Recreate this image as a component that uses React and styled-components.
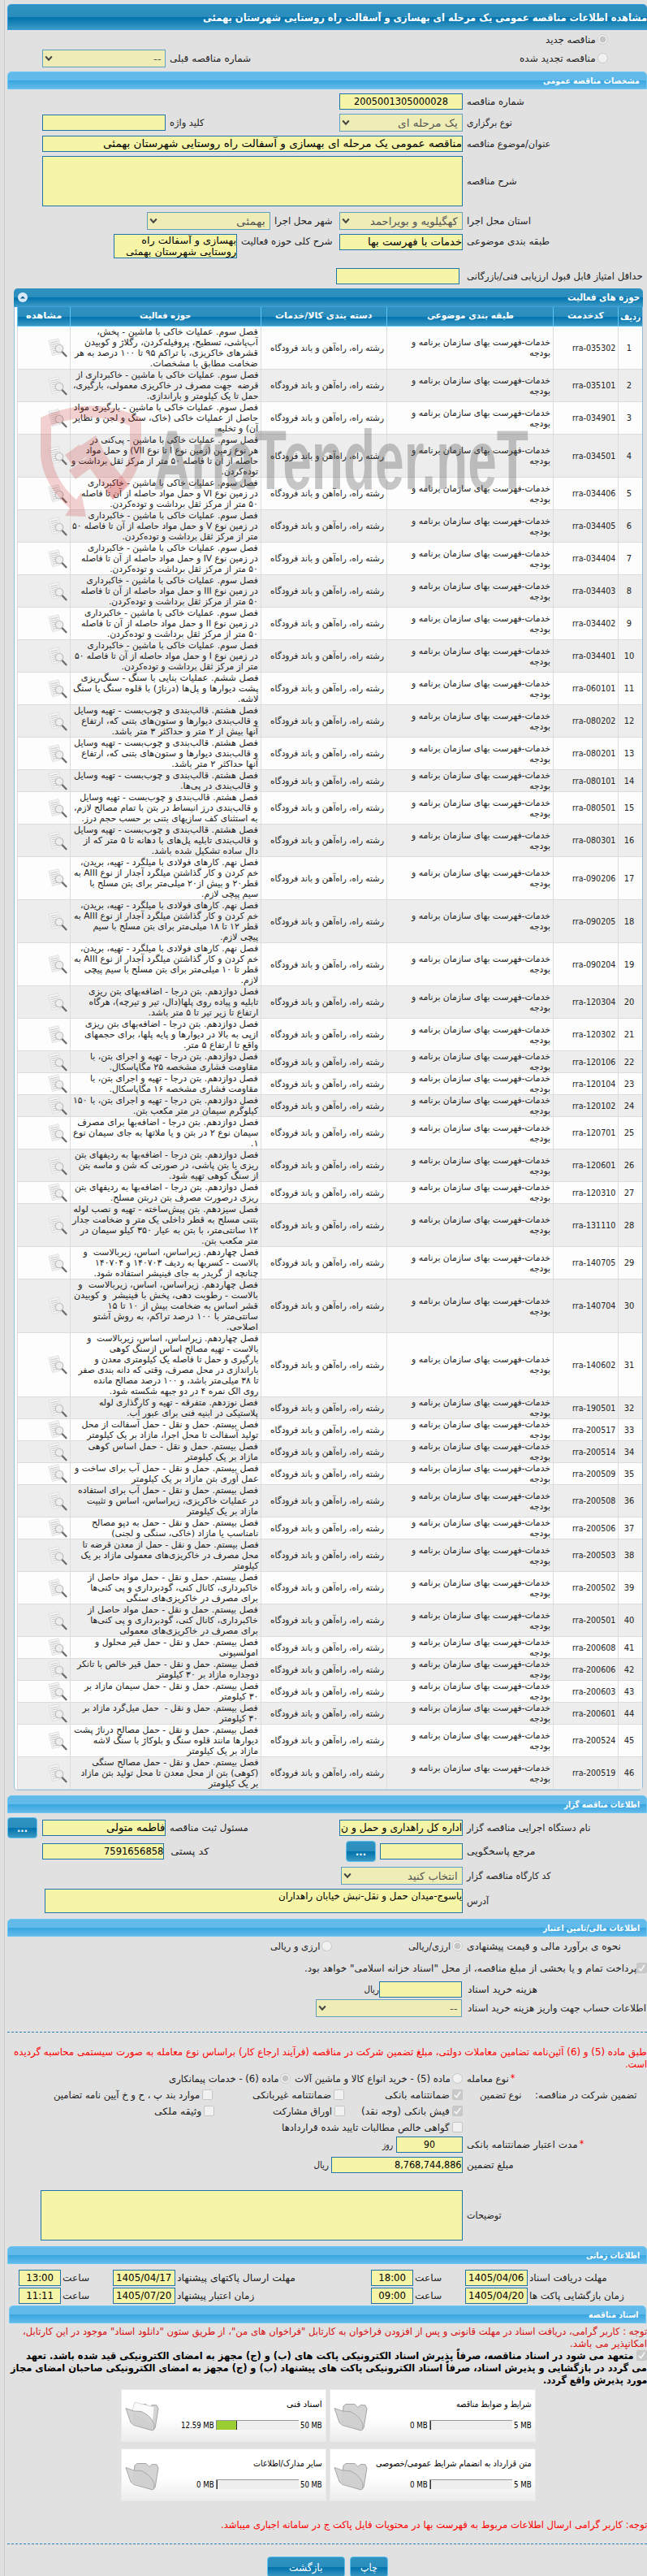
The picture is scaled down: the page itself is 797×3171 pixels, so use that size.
import React, { useLayoutEffect, useRef, useState } from "react"
import styled, { createGlobalStyle, css } from "styled-components"

const GROUP = "رشته راه، راه‌آهن و باند فرودگاه"

// code, width of the text block, lines
const activities = [
  ["rra-035302", 226, "فصل سوم. عملیات خاکی با ماشین - پخش،|آب‌پاشی، تسطیح، پروفیله‌کردن، رگلاژ و کوبیدن|قشرهای خاکریزی، با تراکم ۹۵ تا ۱۰۰ درصد به هر|ضخامت مطابق با مشخصات."],
  ["rra-035101", 228, "فصل سوم. عملیات خاکی با ماشین - خاکبرداری از|قرضه  جهت مصرف در خاکریزی معمولی، بارگیری،|حمل تا یک کیلومتر و باراندازی."],
  ["rra-034901", 228, "فصل سوم. عملیات خاکی با ماشین - بارگیری مواد|حاصل از عملیات خاکی (خاک، سنگ و لجن و نظایر|آن) و تخلیه"],
  ["rra-034501", 230, "فصل سوم. عملیات خاکی با ماشین - پی‌کنی در|هر نوع زمین (زمین نوع I تا نوع VII) و حمل مواد|حاصله از آن تا فاصله ۵۰ متر از مرکز ثقل برداشت و|توده‌کردن."],
  ["rra-034406", 218, "فصل سوم. عملیات خاکی با ماشین - خاکبرداری|در زمین نوع VI و حمل مواد حاصله از آن تا فاصله|۵۰ متر از مرکز ثقل برداشت و توده‌کردن."],
  ["rra-034405", 229, "فصل سوم. عملیات خاکی با ماشین - خاکبرداری|در زمین نوع V و حمل مواد حاصله از آن تا فاصله ۵۰|متر از مرکز ثقل برداشت و توده‌کردن."],
  ["rra-034404", 218, "فصل سوم. عملیات خاکی با ماشین - خاکبرداری|در زمین نوع IV و حمل مواد حاصله از آن تا فاصله|۵۰ متر از مرکز ثقل برداشت و توده‌کردن."],
  ["rra-034403", 218.5, "فصل سوم. عملیات خاکی با ماشین - خاکبرداری|در زمین نوع III و حمل مواد حاصله از آن تا فاصله|۵۰ متر از مرکز ثقل برداشت و توده‌کردن."],
  ["rra-034402", 218, "فصل سوم. عملیات خاکی با ماشین - خاکبرداری|در زمین نوع II و حمل مواد حاصله از آن تا فاصله|۵۰ متر از مرکز ثقل برداشت و توده‌کردن."],
  ["rra-034401", 226, "فصل سوم. عملیات خاکی با ماشین - خاکبرداری|در زمین نوع I و حمل مواد حاصله از آن تا فاصله ۵۰|متر از مرکز ثقل برداشت و توده‌کردن."],
  ["rra-060101", 228, "فصل ششم. عملیات بنایی با سنگ - سنگ‌ریزی|پشت دیوارها و پل‌ها (درناژ) با قلوه سنگ یا سنگ|لاشه."],
  ["rra-080202", 227, "فصل هشتم. قالب‌بندی و چوب‌بست - تهیه وسایل|و قالب‌بندی دیوارها و ستون‌های بتنی که، ارتفاع|آنها بیش از ۲ متر و حداکثر ۳ متر باشد."],
  ["rra-080201", 227, "فصل هشتم. قالب‌بندی و چوب‌بست - تهیه وسایل|و قالب‌بندی دیوارها و ستون‌های بتنی که، ارتفاع|آنها حداکثر ۲ متر باشد."],
  ["rra-080101", 227, "فصل هشتم. قالب‌بندی و چوب‌بست - تهیه وسایل|و قالب‌بندی در پی‌ها."],
  ["rra-080501", 227, "فصل هشتم. قالب‌بندی و چوب‌بست - تهیه وسایل|و قالب‌بندی درز انبساط در بتن با تمام مصالح لازم،|به استثنای کف سازیهای بتنی بر حسب حجم درز."],
  ["rra-080301", 227, "فصل هشتم. قالب‌بندی و چوب‌بست - تهیه وسایل|و قالب‌بندی تابلیه پل‌های با دهانه تا ۵ متر که از|دال ساده تشکیل شده باشد."],
  ["rra-090206", 227, "فصل نهم. کارهای فولادی با میلگرد - تهیه، بریدن،|خم کردن و کار گذاشتن میلگرد آجدار از نوع AIII به|قطر۲۰ و بیش از۲۰ میلی‌متر برای بتن مسلح با|سیم پیچی لازم."],
  ["rra-090205", 227, "فصل نهم. کارهای فولادی با میلگرد - تهیه، بریدن،|خم کردن و کار گذاشتن میلگرد آجدار از نوع AIII به|قطر ۱۲ تا ۱۸ میلی‌متر برای بتن مسلح با سیم|پیچی لازم."],
  ["rra-090204", 227, "فصل نهم. کارهای فولادی با میلگرد - تهیه، بریدن،|خم کردن و کار گذاشتن میلگرد آجدار از نوع AIII به|قطر تا ۱۰ میلی‌متر برای بتن مسلح با سیم پیچی|لازم."],
  ["rra-120304", 209, "فصل دوازدهم. بتن درجا - اضافه‌بهای بتن ریزی|تابلیه و پیاده روی پلها(دال، تیر و تیرچه)، هرگاه|ارتفاع تا زیر تیر تا ۵ متر باشد."],
  ["rra-120302", 214, "فصل دوازدهم. بتن درجا - اضافه‌بهای بتن ریزی|ازپی به بالا در دیوارها و پایه پلها، برای حجمهای|واقع تا ارتفاع ۵ متر."],
  ["rra-120106", 207, "فصل دوازدهم. بتن درجا - تهیه و اجرای بتن، با|مقاومت فشاری مشخصه ۲۵ مگاپاسکال."],
  ["rra-120104", 207, "فصل دوازدهم. بتن درجا - تهیه و اجرای بتن، با|مقاومت فشاری مشخصه ۱۶ مگاپاسکال."],
  ["rra-120102", 228, "فصل دوازدهم. بتن درجا - تهیه و اجرای بتن، با ۱۵۰|کیلوگرم سیمان در متر مکعب بتن."],
  ["rra-120701", 228, "فصل دوازدهم. بتن درجا - اضافه‌بها برای مصرف|سیمان نوع ۲ در بتن و یا ملاتها به جای سیمان نوع|۱."],
  ["rra-120601", 226, "فصل دوازدهم. بتن درجا - اضافه‌بها به ردیفهای بتن|ریزی یا بتن پاشی، در صورتی که شن و ماسه بتن|از سنگ کوهی تهیه شود."],
  ["rra-120310", 226, "فصل دوازدهم. بتن درجا - اضافه‌بها به ردیفهای بتن|ریزی درصورت مصرف بتن دربتن مسلح."],
  ["rra-131110", 229, "فصل سیزدهم. بتن پیش‌ساخته - تهیه و نصب لوله|بتنی مسلح به قطر داخلی یک متر و ضخامت جدار|۱۲ سانتی‌متر، با بتن به عیار ۳۵۰ کیلو سیمان در|متر مکعب بتن."],
  ["rra-140705", 215.5, "فصل چهاردهم. زیراساس، اساس، زیربالاست  و|بالاست - کسربها به ردیف ۱۴۰۷۰۳ و ۱۴۰۷۰۴|چنانچه از گریدر به جای فینیشر استفاده شود."],
  ["rra-140704", 227, "فصل چهاردهم. زیراساس، اساس، زیربالاست  و|بالاست - رطوبت دهی، پخش با فینیشر  و کوبیدن|قشر اساس به ضخامت بیش از ۱۰ تا ۱۵|سانتی‌متر با ۱۰۰ درصد تراکم، به روش آشتو|اصلاحی."],
  ["rra-140602", 221.5, "فصل چهاردهم. زیراساس، اساس، زیربالاست  و|بالاست - تهیه مصالح اساس ازسنگ کوهی|بارگیری و حمل تا فاصله یک کیلومتری معدن و|باراندازی در محل مصرف، وقتی که دانه بندی صفر|تا ۳۸ میلی‌متر باشد، و ۱۰۰ درصد مصالح مانده|روی الک نمره ۴ در دو جبهه شکسته شود."],
  ["rra-190501", 196, "فصل نوزدهم. متفرقه - تهیه و کارگذاری لوله|پلاستیکی در ابنیه فنی برای عبور آب."],
  ["rra-200517", 217.5, "فصل بیستم. حمل و نقل - حمل آسفالت از محل|تولید آسفالت تا محل اجرا، مازاد بر یک کیلومتر"],
  ["rra-200514", 209.5, "فصل بیستم. حمل و نقل - حمل اساس کوهی|مازاد بر یک کیلومتر"],
  ["rra-200509", 226, "فصل بیستم. حمل و نقل - حمل آب برای ساخت و|عمل آوری بتن مازاد بر یک کیلومتر"],
  ["rra-200508", 222, "فصل بیستم. حمل و نقل - حمل آب برای استفاده|در عملیات خاکریزی، زیراساس، اساس و تثبیت|مازاد بر یک کیلومتر"],
  ["rra-200506", 205, "فصل بیستم. حمل و نقل - حمل به دپو مصالح|نامناسب یا مازاد (خاکی، سنگی و لجنی)"],
  ["rra-200503", 218.5, "فصل بیستم. حمل و نقل - حمل از معدن قرضه تا|محل مصرف در خاکریزی‌های معمولی مازاد بر یک|کیلومتر"],
  ["rra-200502", 210, "فصل بیستم. حمل و نقل - حمل مواد حاصل از|خاکبرداری، کانال کنی، گودبرداری و پی کنی‌ها|برای مصرف در خاکریزی‌های سنگی"],
  ["rra-200501", 210, "فصل بیستم. حمل و نقل - حمل مواد حاصل از|خاکبرداری، کانال کنی، گودبرداری و پی کنی‌ها|برای مصرف در خاکریزی‌های معمولی"],
  ["rra-200608", 201, "فصل بیستم. حمل و نقل - حمل قیر محلول و|امولسیونی"],
  ["rra-200606", 223, "فصل بیستم. حمل و نقل - حمل قیر خالص با تانکر|دوجداره مازاد بر ۳۰ کیلومتر"],
  ["rra-200603", 214, "فصل بیستم. حمل و نقل - حمل سیمان مازاد بر|۳۰ کیلومتر"],
  ["rra-200601", 216.5, "فصل بیستم. حمل و نقل -  حمل میل‌گرد مازاد بر|۳۰ کیلومتر"],
  ["rra-200524", 227, "فصل بیستم. حمل و نقل - حمل مصالح درناژ پشت|دیوارها مانند قلوه سنگ و بلوکاژ با سنگ لاشه|مازاد بر یک کیلومتر"],
  ["rra-200519", 218.5, "فصل بیستم. حمل و نقل - حمل مصالح سنگی|(کوهی) بتن از محل معدن تا محل تولید بتن مازاد|بر یک کیلومتر"],
]

const columns = [
  ["ردیف", 25],
  ["کدخدمت", 45],
  ["طبقه بندی موضوعی", 107],
  ["دسته بندی کالا/خدمات", 119],
  ["حوزه فعالیت", 63],
  ["مشاهده", 44],
]

const folders = [
  { title: "شرایط و ضوابط مناقصه", w: 93, max: 5, maxW: 22, used: 0, usedW: 22 },
  { title: "اسناد فنی", w: 44, max: 50, maxW: 27, used: 12.59, usedW: 41 },
  { title: "متن قرارداد به انضمام شرایط عمومی/خصوصی", w: 192, max: 5, maxW: 22, used: 0, usedW: 22 },
  { title: "سایر مدارک/اطلاعات", w: 85, max: 50, maxW: 27, used: 0, usedW: 22 },
]

const dates = [
  [
    ["مهلت دریافت اسناد", 96, "1405/04/06", "18:00"],
    ["مهلت ارسال پاکتهای پیشنهاد", 146, "1405/04/17", "13:00"],
  ],
  [
    ["زمان بازگشایی پاکت ها", 117, "1405/04/20", "09:00"],
    ["زمان اعتبار پیشنهاد", 95, "1405/07/20", "11:11"],
  ],
]

// keeps a text at its set width whatever font is installed
const Fit = ({ w, children }) => {
  const inner = useRef(null)
  const [scale, setScale] = useState(1)
  useLayoutEffect(() => {
    setScale(w / inner.current.offsetWidth)
  }, [w])
  return (
    <FitBox $w={w}>
      <FitText ref={inner} style={{ transform: `scaleX(${scale})` }}>{children}</FitText>
    </FitBox>
  )
}

const Magnifier = () => (
  <MagnifierIcon viewBox="0 0 24 24">
    <path d="M1 3.500L13 .8l4.500 17.700L5.500 21.500Z" fill="#f6f6f6" stroke="#d6d6d6" strokeWidth=".7" />
    <path d="M3 6l9.500-2M3.600 8.500l9.500-2M4.200 11l6-1.300M4.800 13.500l5-1.100M5.500 16l5-1M6 18.500l7-1.500" stroke="#c2c2c2" strokeWidth=".9" />
    <circle cx="14" cy="13" r="4.800" fill="#ececec" fillOpacity=".85" stroke="#bcbcbc" strokeWidth="1.100" />
    <path d="M18 17.500l4.500 4.700" stroke="#6c6c6c" strokeWidth="2.300" strokeLinecap="round" />
  </MagnifierIcon>
)

const Folder = ({ full }) => (
  <FolderIcon viewBox="0 0 44 40">
    <path d="M12 8l3-2.500h11l4 4 3-3 6 .3 2 4.200-4 24-4 2.500L10 28Z" fill="#d4d4d4" stroke="#a5a5a5" strokeLinejoin="round" />
    {full && <path d="M8.500 15l3.500-12 24 6-2 22Z" fill="#fbfbfb" stroke="#d2d2d2" strokeWidth=".8" />}
    <path d="M1 10.500l10 3.500 9 .5c7 3 13 8 16 16l-.5 6.500-2 .8L11 31.500 7 28Z" fill="#cfcfcf" fillOpacity=".9" stroke="#a8a8a8" strokeLinejoin="round" />
  </FolderIcon>
)

const Watermark = () => (
  <WatermarkArt viewBox="0 0 620 150">
    <g fill="#c81e1e" fillOpacity=".2">
      <path fillRule="evenodd" d="M0 15Q62-14 124 15V58Q120 92 89 116L80 105 97 89Q110 75 110 50V25Q62 5 13 25V61Q18 94 44 116L50 107 56 137 30 136 36 127Q2 96 0 61Z" />
      <path d="M30 61L48 48 58 62 40 75ZM49 50L68 37 80 61 109 99 89 116 61 78 43 91 35 80 57 64Z" />
    </g>
    <text x="139" y="103" textLength="462" lengthAdjust="spacingAndGlyphs">AriaTender.neT</text>
  </WatermarkArt>
)

const Section = ({ children, w, top, inset }) => (
  <SectionBar $top={top} $inset={inset}><Fit w={w}>{children}</Fit></SectionBar>
)

const Label = ({ children, w, col, near, star }) => (
  <LabelBox $col={col} $near={near}>
    {star && <Star>*</Star>}
    <Fit w={w}>{children}</Fit>
  </LabelBox>
)

const Input = ({ children, w, text, gap, center }) => (
  <Field $w={w} $gap={gap} $center={center}>{children && <Fit w={text}>{children}</Fit>}</Field>
)

const Select = ({ children, w, text }) => (
  <SelectBox $w={w}>
    <Fit w={text}>{children}</Fit>
    <svg viewBox="0 0 10 8" width="10" height="8"><path d="M1.200 1.500L5 5.700 8.800 1.500" fill="none" stroke="#444" strokeWidth="2" /></svg>
  </SelectBox>
)

const Check = ({ checked }) => (
  <CheckBox $checked={checked}>
    {checked && <svg viewBox="0 0 12 12"><path d="M2 6.500l2.800 3L10 2" fill="none" stroke="#f6f6f6" strokeWidth="1.800" /></svg>}
  </CheckBox>
)

const RadioOption = ({ children, checked, w, col, gap }) => (
  <Option $col={col} $gap={gap}><Radio $checked={checked} /><Fit w={w}>{children}</Fit></Option>
)

const CheckOption = ({ children, checked, w, col, gap, space = 3 }) => (
  <Option $col={col} $gap={gap} $space={space}><Check checked={checked} /><Fit w={w}>{children}</Fit></Option>
)

const App = () => {
  return (
    <>
      <GlobalStyle />
      <Page>
        <TitleBar><Fit w={547}>مشاهده اطلاعات مناقصه عمومی یک مرحله ای بهسازی و آسفالت راه روستایی شهرستان بهمئی</Fit></TitleBar>
        <Row $h={24}>
          <RadioOption gap={48} w={62} checked>مناقصه جدید</RadioOption>
        </Row>
        <Row $h={22} $pad={43}>
          <RadioOption gap={48} w={94}>مناقصه تجدید شده</RadioOption>
          <Label w={100}>شماره مناقصه قبلی</Label>
          <Select w={152} text={9}>--</Select>
        </Row>

        <Section w={119} top={5}>مشخصات مناقصه عمومی</Section>
        <Row $h={20} $top={5}>
          <Label col={227} w={71}>شماره مناقصه</Label>
          <Input w={152} text={116} center>2005001305000028</Input>
        </Row>
        <Row $h={22} $top={5} $pad={43}>
          <Label col={227} w={56}>نوع برگزاری</Label>
          <Select w={152} text={74}>یک مرحله ای</Select>
          <Label w={42}>کلید واژه</Label>
          <Input w={152} />
        </Row>
        <Row $h={20} $top={5}>
          <Label col={227} w={103}>عنوان/موضوع مناقصه</Label>
          <Input w={518} text={442}>مناقصه عمومی یک مرحله ای بهسازی و آسفالت راه روستایی شهرستان بهمئی</Input>
        </Row>
        <Row $h={62} $top={5}>
          <Label col={227} w={62}>شرح مناقصه</Label>
          <Area $w={518} $h={62} />
        </Row>
        <Row $h={22} $top={7} $pad={172}>
          <Label col={227} w={79}>استان محل اجرا</Label>
          <Select w={152} text={108}>کهگیلویه و بویراحمد</Select>
          <Label w={72}>شهر محل اجرا</Label>
          <Select w={152} text={36}>بهمئی</Select>
        </Row>
        <Row $h={30} $top={5} $pad={131} $start>
          <Label col={227} w={102}>طبقه بندی موضوعی</Label>
          <Input w={152} text={116}>خدمات با فهرست بها</Input>
          <Label w={113}>شرح کلی حوزه فعالیت</Label>
          <Area $w={152} $h={30}>
            <Fit w={136}>
              <AreaLine>بهسازی و آسفالت راه</AreaLine>
              <AreaLine>روستایی شهرستان بهمئی</AreaLine>
            </Fit>
          </Area>
        </Row>
        <Row $h={20} $top={12}>
          <Label col={227} w={217}>حداقل امتیاز قابل قبول ارزیابی فنی/بازرگانی</Label>
          <Input w={152} gap={4} />
        </Row>

        <Panel>
          <PanelTitle>
            <Fit w={89}>حوزه های فعالیت</Fit>
            <Toggle><svg viewBox="0 0 10 10" width="8" height="8"><path d="M1 7l4-4 4 4Z" fill="#0b5d92" /></svg></Toggle>
          </PanelTitle>
          <HeadRow>
            {columns.map(([name, w]) => <HeadCell key={name}><Fit w={w}>{name}</Fit></HeadCell>)}
          </HeadRow>
          {activities.map(([code, w, text], i) => (
            <BodyRow key={code}>
              <Cell $center>{i + 1}</Cell>
              <Cell><Fit w={53}>{code}</Fit></Cell>
              <Cell>
                <Fit w={171}>
                  <Line>خدمات-فهرست بهای سازمان برنامه و</Line>
                  <Line>بودجه</Line>
                </Fit>
              </Cell>
              <Cell><Fit w={140}>{GROUP}</Fit></Cell>
              <Cell>
                <Fit w={w}>{text.split("|").map((line) => <Line key={line}>{line}</Line>)}</Fit>
              </Cell>
              <Cell><Magnifier /></Cell>
            </BodyRow>
          ))}
          <Watermark />
        </Panel>

        <Section w={93} top={6}>اطلاعات مناقصه گزار</Section>
        <Row $h={26} $top={5}>
          <Label col={227} w={152}>نام دستگاه اجرایی مناقصه گزار</Label>
          <Input w={152} text={149}>اداره کل راهداری و حمل و ن</Input>
          <Label w={97}>مسئول ثبت مناقصه</Label>
          <Input w={152} text={72}>فاطمه متولی</Input>
          <Dots $w={37} $gap={6}>...</Dots>
        </Row>
        <Row $h={26} $top={3} $pad={43}>
          <Label col={227} w={84}>مرجع پاسخگویی</Label>
          <Input w={102} />
          <Dots $w={37} $gap={5}>...</Dots>
          <Label w={48}>کد پستی</Label>
          <Input w={150} gap={2} text={73}>7591656858</Input>
        </Row>
        <Row $h={22} $top={6}>
          <Label col={227} w={104}>کد کارگاه مناقصه گزار</Label>
          <Select w={150} text={62}>انتخاب کنید</Select>
        </Row>
        <Row $h={30} $top={5}>
          <Label col={227} w={27}>آدرس</Label>
          <Area $w={515} $h={30}><Fit w={226}>یاسوج-میدان حمل و نقل-نبش خیابان راهداران</Fit></Area>
        </Row>

        <Section w={119} top={7}>اطلاعات مالی/تامین اعتبار</Section>
        <Row $h={22} $top={1}>
          <Label col={227} w={190}>نحوه ی برآورد مالی و قیمت پیشنهادی</Label>
          <RadioOption col={161} w={52} checked>ارزی/ریالی</RadioOption>
          <RadioOption w={61}>ارزی و ریالی</RadioOption>
        </Row>
        <Row $h={20} $top={6}>
          <CheckOption w={409} space={0} checked>پرداخت تمام و یا بخشی از مبلغ مناقصه، از محل "اسناد خزانه اسلامی" خواهد بود.</CheckOption>
        </Row>
        <Row $h={20} $top={6}>
          <Label col={228} near={7} w={86}>هزینه خرید اسناد</Label>
          <Input w={102} />
          <Unit><Fit w={19}>ریال</Fit></Unit>
        </Row>
        <Row $h={22} $top={2}>
          <Label col={228} near={7} w={220}>اطلاعات حساب جهت واریز هزینه خرید اسناد</Label>
          <Select w={180} text={9}>--</Select>
        </Row>
        <Dashes $top={18} />
        <Warning $top={17}>
          <Fit w={780}>طبق ماده (5) و (6) آئین‌نامه تضامین معاملات دولتی، مبلغ تضمین شرکت در مناقصه (فرآیند ارجاع کار) براساس نوع معامله به صورت سیستمی محاسبه گردیده</Fit>
          <Fit w={27}>است.</Fit>
        </Warning>
        <Row $h={20}>
          <Label col={227} w={52} star>نوع معامله</Label>
          <RadioOption col={212} w={192}>ماده (5) - خرید انواع کالا و ماشین آلات</RadioOption>
          <RadioOption w={136} checked>ماده (6) - خدمات پیمانکاری</RadioOption>
        </Row>
        <Row $h={20}>
          <Caption $w={142}><Fit w={126}>تضمین شرکت در مناقصه:</Fit></Caption>
          <Caption $w={85}><Fit w={52}>نوع تضمین</Fit></Caption>
          <CheckOption col={146} w={80} checked>ضمانتنامه بانکی</CheckOption>
          <CheckOption col={162} w={97}>ضمانتنامه غیربانکی</CheckOption>
          <CheckOption w={180}>موارد بند پ ، ح و خ آیین نامه تضامین</CheckOption>
        </Row>
        <Row $h={20}>
          <CheckOption gap={227} col={145} w={109} checked>فیش بانکی (وجه نقد)</CheckOption>
          <CheckOption col={161} w={73}>اوراق مشارکت</CheckOption>
          <CheckOption w={58}>وثیقه ملکی</CheckOption>
        </Row>
        <Row $h={20}>
          <CheckOption gap={227} w={207}>گواهی خالص مطالبات تایید شده قراردادها</CheckOption>
        </Row>
        <Row $h={20} $top={1}>
          <Label col={227} w={137} star>مدت اعتبار ضمانتنامه بانکی</Label>
          <Input w={82} text={14} center>90</Input>
          <Unit $gap={4}><Fit w={13}>روز</Fit></Unit>
        </Row>
        <Row $h={20} $top={5}>
          <Label col={227} w={58}>مبلغ تضمین</Label>
          <Input w={162} text={83}>8,768,744,886</Input>
          <Unit $gap={3}><Fit w={19}>ریال</Fit></Unit>
        </Row>
        <Row $h={62} $top={21}>
          <Label col={227} w={43}>توضیحات</Label>
          <Area $w={520} $h={62} />
        </Row>

        <Section w={66} top={7}>اطلاعات زمانی</Section>
        {dates.map((row, i) => (
          <Row key={i} $h={20} $top={i ? 2 : 7}>
            {row.map(([name, w, day, time], k) => (
              <React.Fragment key={name}>
                <Label col={k ? 241 : 147} near={2} w={w}>{name}</Label>
                <Input w={77} text={68} center>{day}</Input>
                <Label col={64} near={2} w={33}>ساعت</Label>
                <Input w={52} text={34} center>{time}</Input>
              </React.Fragment>
            ))}
          </Row>
        ))}

        <Section w={62} top={2} inset>اسناد مناقصه</Section>
        <Notice $top={3}>
          <Fit w={769}>توجه : کاربر گرامی، دریافت اسناد در مهلت قانونی و پس از افزودن فراخوان به کارتابل "فراخوان های من"، از طریق ستون "دانلود اسناد" موجود در این کارتابل،</Fit>
          <Fit w={95}>امکانپذیر می باشد.</Fit>
        </Notice>
        <Pledge>
          <CheckOption w={749} checked>متعهد می شود در اسناد مناقصه، صرفاً پذیرش اسناد الکترونیکی پاکت های (ب) و (ج) مجهز به امضای الکترونیکی قید شده باشد. تعهد</CheckOption>
          <Fit w={784}>می گردد در بازگشایی و پذیرش اسناد، صرفاً اسناد الکترونیکی پاکت های پیشنهاد (ب) و (ج) مجهز به امضای الکترونیکی صاحبان امضای مجاز</Fit>
          <Fit w={128}>مورد پذیرش واقع گردد.</Fit>
        </Pledge>
        <Cards>
          {folders.map((f) => (
            <Card key={f.title}>
              <CardTitle><Fit w={f.w}>{f.title}</Fit></CardTitle>
              <Folder full={f.used > 0} />
              <Usage>
                <Fit w={f.maxW}>{f.max} MB</Fit>
                <Meter><MeterFill style={{ width: `${(f.used / f.max) * 100}%` }} /></Meter>
                <Fit w={f.usedW}>{f.used} MB</Fit>
              </Usage>
            </Card>
          ))}
        </Cards>
        <Warning $top={22}>
          <Fit w={525}>توجه: کاربر گرامی ارسال اطلاعات مربوط به فهرست بها در محتویات فایل پاکت ج در سامانه اجباری میباشد.</Fit>
        </Warning>
        <Dashes $top={15} />
        <Actions>
          <Button $w={47}><Fit w={21}>چاپ</Fit></Button>
          <Button $w={96}><Fit w={41}>بازگشت</Fit></Button>
        </Actions>
      </Page>
    </>
  )
}

const GlobalStyle = createGlobalStyle`
  * {
    box-sizing: border-box;
  }
  body {
    margin: 0;
    background: #e1e1e1;
    overflow: hidden;
  }
`;
const deepBlue = css`
  background: linear-gradient(#2f92c0 0, #2b8dbd 50%, #0074ae 50%, #0a78b0 60%, #3c9ac4 100%);
`;
const Page = styled.div`
  direction: rtl;
  width: 792px;
  height: 3171px;
  margin-left: 5px;
  padding: 5px 0 0 3px;
  border-left: 1px solid #cbcbcb;
  overflow: hidden;
  font-family: "DejaVu Sans Condensed", "DejaVu Sans", sans-serif;
  font-stretch: condensed;
  font-size: 11.500px;
  color: #222;
  white-space: nowrap;
`;
const FitBox = styled.span`
  display: block;
  flex: none;
  width: ${p => p.$w}px;
`;
const FitText = styled.span`
  display: inline-block;
  vertical-align: top;
  transform-origin: right center;
`;
const TitleBar = styled.div`
  ${deepBlue}
  height: 32px;
  line-height: 32px;
  border: 1px solid #3a9be0;
  border-right: 0;
  border-radius: 5px 5px 0 0;
  color: white;
  font-size: 12.500px;
  font-weight: bold;
`;
const SectionBar = styled.div`
  height: 22px;
  line-height: 20px;
  margin: ${p => p.$top}px ${p => p.$inset ? "1px 0 2px" : "0 0 0"};
  padding-right: 8px;
  border: 1px solid #6cc8f2;
  border-radius: 5px 5px 0 0;
  background: linear-gradient(#62baea 0, #62baea 50%, #38a5e0 50%, #62bae9 100%);
  color: white;
  font-size: 10.500px;
  font-weight: bold;
`;
const Row = styled.div`
  display: flex;
  align-items: ${p => p.$start ? "flex-start" : "center"};
  height: ${p => p.$h}px;
  margin-top: ${p => p.$top || 0}px;
  padding-left: ${p => p.$pad || 0}px;
`;
const LabelBox = styled.div`
  ${p => p.$col ? `flex: 0 0 ${p.$col}px;` : "flex: 1;"}
  display: flex;
  justify-content: flex-end;
  padding-left: ${p => p.$near || 5}px;
  line-height: 18px;
`;
const Caption = styled.div`
  flex: 0 0 ${p => p.$w}px;
  padding-right: 12px;
`;
const box = css`
  flex: none;
  width: ${p => p.$w}px;
  margin-right: ${p => p.$gap || 0}px;
  border: 1px solid #1f74aa;
  background: #f6f4a6;
  color: #000;
  overflow: hidden;
`;
const Field = styled.div`
  ${box}
  display: flex;
  justify-content: ${p => p.$center ? "center" : "flex-start"};
  height: 20px;
  line-height: 18px;
  font-size: 13px;
`;
const Area = styled.div`
  ${box}
  height: ${p => p.$h}px;
  font-size: 11.500px;
  line-height: 17px;
`;
const AreaLine = styled.span`
  display: block;
  height: 14px;
  line-height: 14px;
`;
const SelectBox = styled.div`
  ${box}
  display: flex;
  align-items: center;
  justify-content: space-between;
  height: 22px;
  padding: 0 5px 0 2px;
  border-color: #639fc2;
  background: #efedb6;
  color: #555;
  font-size: 13px;
`;
const Option = styled.div`
  display: flex;
  align-items: center;
  gap: ${p => p.$space ?? 2}px;
  ${p => p.$col && `flex: 0 0 ${p.$col}px;`}
  margin-right: ${p => p.$gap || 0}px;
`;
const Radio = styled.span`
  flex: none;
  width: 13px;
  height: 13px;
  margin-bottom: 2px;
  border: 1px solid #c8c8c8;
  border-radius: 50%;
  background: ${p => p.$checked ? "radial-gradient(#c6c6c6 0 3.8px, #f3f3f3 4.300px)" : "#f1f1f1"};
`;
const CheckBox = styled.span`
  display: flex;
  flex: none;
  width: 13px;
  height: 13px;
  margin-bottom: 2px;
  border: 1px solid #c6c6c6;
  border-radius: 2px;
  background: ${p => p.$checked ? "#c9c9c9" : "#f1f1f1"};
`;
const Unit = styled.span`
  margin-right: ${p => p.$gap || 0}px;
`;
const Star = styled.span`
  margin-left: 2px;
  color: #f00;
  line-height: 16px;
`;
const Button = styled.div`
  ${deepBlue}
  display: flex;
  flex: none;
  justify-content: center;
  width: ${p => p.$w}px;
  height: 26px;
  border: 1px solid #62c1ee;
  border-radius: 4px;
  color: white;
  font-size: 12.500px;
  line-height: 25px;
`;
const Dots = styled(Button)`
  margin-right: ${p => p.$gap}px;
  font-weight: bold;
`;
const Dashes = styled.div`
  margin-top: ${p => p.$top}px;
  border-top: 1px dashed #2a7fb4;
`;
const Warning = styled.div`
  margin-top: ${p => p.$top}px;
  color: #f00;
  font-size: 12px;
  line-height: 15px;
`;
const Notice = styled(Warning)`
  color: #d80d0d;
`;
const Pledge = styled.div`
  color: #000;
  font-size: 12px;
  font-weight: bold;
  line-height: 14.500px;
`;

const Panel = styled.div`
  position: relative;
  margin: 5px 5px 0 8px;
  padding-left: 3px;
  border: 1px solid #8fbfdc;
  border-top: 0;
  border-radius: 5px;
  background: #fdfdfd;
`;
const PanelTitle = styled.div`
  ${deepBlue}
  display: flex;
  align-items: center;
  justify-content: space-between;
  height: 23px;
  margin: 0 -1px 0 -4px;
  padding: 0 4px 0 5px;
  border-radius: 5px 5px 0 0;
  border-bottom: 1px solid #3b9fe0;
  color: white;
  font-size: 12px;
  font-weight: bold;
`;
const Toggle = styled.span`
  display: flex;
  align-items: center;
  justify-content: center;
  width: 12px;
  height: 12px;
  border-radius: 50%;
  background: #dbeaf8;
`;
const BodyRow = styled.div`
  display: grid;
  grid-template-columns: 30px 80px 205px 155px 235px 65px;
  border-bottom: 1px solid #dcdcdc;
  font-size: 11px;
  &:nth-child(even) {
    background: #ededed;
  }
`;
const HeadRow = styled(BodyRow)`
  &&& {
    ${deepBlue}
  }
  height: 24px;
  border-bottom: 1px solid #5fc4f3;
`;
const HeadCell = styled.div`
  display: flex;
  justify-content: center;
  border-left: 1px solid #5fc4f3;
  color: white;
  font-weight: bold;
  line-height: 21px;
  &:first-child {
    line-height: 26px;
  }
`;
const Cell = styled.div`
  display: flex;
  flex-direction: column;
  justify-content: center;
  align-items: ${p => p.$center ? "center" : "flex-start"};
  padding-right: 3px;
  border-left: 1px solid #dcdcdc;
  line-height: 13px;
`;
const Line = styled.span`
  display: block;
  height: 13px;
  white-space: pre;
`;
const MagnifierIcon = styled.svg`
  flex: none;
  width: 24px;
  height: 24px;
`;
const WatermarkArt = styled.svg`
  position: absolute;
  left: 32px;
  top: 144px;
  width: 620px;
  height: 150px;
  direction: ltr;
  text {
    fill: #4a4a4a;
    fill-opacity: .3;
    font: bold 104px "Liberation Sans Narrow", "Liberation Sans", sans-serif;
  }
`;

const Cards = styled.div`
  display: grid;
  grid-template-columns: 254px 253px;
  gap: 8px 4px;
  margin: 4px 137px 0 0;
`;
const Card = styled.div`
  display: grid;
  grid-template-columns: 1fr 46px;
  grid-template-rows: 34px 29px;
  padding: 0 4px 0 2px;
  border: 1px solid #eaeaea;
  background: linear-gradient(#fff 55%, #ececec);
  color: #000;
  font-size: 10.500px;
`;
const CardTitle = styled.div`
  padding-top: 11px;
`;
const FolderIcon = styled.svg`
  grid-column: 2;
  grid-row: 1 / 3;
  align-self: center;
  width: 44px;
  height: 40px;
`;
const Usage = styled.div`
  display: flex;
  gap: 2px;
  align-items: center;
  height: 18px;
  ${FitText} {
    direction: ltr;
  }
`;
const Meter = styled.div`
  direction: ltr;
  width: 102px;
  height: 12px;
  border-top: 1px solid #999;
  background: #eee;
`;
const MeterFill = styled.div`
  height: 100%;
  border-left: 1px solid #888;
  border-right: 1px solid #333;
  background: #9acd32;
`;
const Actions = styled.div`
  display: flex;
  gap: 6px;
  margin: 15px 319px 0 0;
`;

export default App
